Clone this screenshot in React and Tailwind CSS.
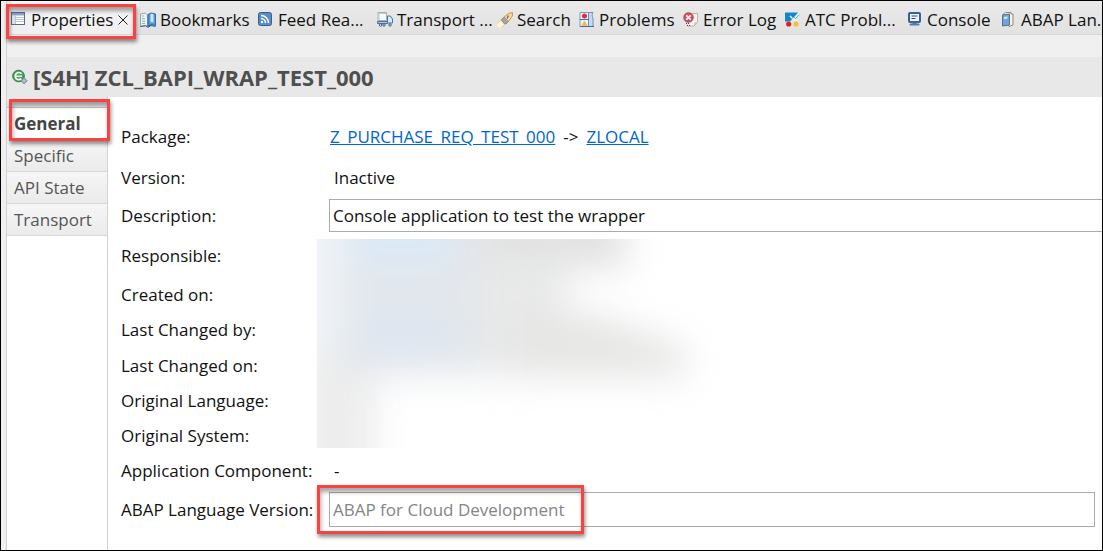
import React from "react";

const ICON = "h-4 w-4 shrink-0";

function TableIcon() {
  return (
    <svg className={ICON} viewBox="0 0 16 16" aria-hidden="true">
      <rect x="0.5" y="0.5" width="13" height="12" fill="#fff" stroke="#5d6a8c" />
      <rect x="1" y="1" width="12" height="2.500" fill="#8fa3c8" />
      <path d="M1 5.500h12M1 7.500h12M1 9.500h12M4.500 3v9" stroke="#b9c3d8" fill="none" />
      <rect x="1" y="4" width="3" height="8" fill="#dce3f0" />
    </svg>
  );
}

function BookIcon() {
  return (
    <svg className={ICON} viewBox="0 0 16 16" aria-hidden="true">
      <path d="M.5 2l5-1 2 2v11.500l-2-1-5 1z" fill="#eef3ea" stroke="#8a9a86" strokeWidth="0.8" />
      <path d="M2 4h2M2 6.500l3 .5M2 9l3 .5M2 11.500h3" stroke="#7fb0dc" fill="none" />
      <path d="M8 2.500l3-1.500 4.500 1v11.500l-4.500-1-3 2z" fill="#4f9ae0" stroke="#235d9c" strokeWidth="0.9" />
      <path d="M10.500 1.800v9l1.500-1 1.500 1.200V2z" fill="#cfe6fb" />
      <path d="M0.500 14.500l5-.8L8 15.300l3-1.800 4.500 1" stroke="#235d9c" fill="none" />
    </svg>
  );
}

function FeedIcon() {
  return (
    <svg className={ICON} viewBox="0 0 16 16" aria-hidden="true">
      <rect x="0.5" y="0.500" width="13" height="13" rx="2" fill="#5b8cc8" stroke="#315f9c" />
      <path d="M3 3.500a7.500 7.500 0 0 1 7.500 7.500M3 6.500a4.500 4.500 0 0 1 4.500 4.500" stroke="#fff" strokeWidth="1.400" fill="none" />
      <circle cx="4" cy="10" r="1.200" fill="#fff" />
    </svg>
  );
}

function TruckIcon() {
  return (
    <svg className={ICON} viewBox="0 0 16 16" aria-hidden="true">
      <rect x="1" y="0.500" width="8.500" height="8" fill="#f4fbff" stroke="#b9b184" />
      <path d="M2 8V1.500h7" stroke="#a9cdea" fill="none" />
      <path d="M10.500 4h2.800l2.200 3v4H10.500z" fill="#d9e9f8" stroke="#4275ae" />
      <path d="M0.500 9.500h10v2h-10z" fill="#a8c6e6" stroke="#4275ae" />
      <circle cx="3.500" cy="13" r="1.200" fill="#fff" stroke="#39577f" />
      <circle cx="7" cy="13" r="1.200" fill="#fff" stroke="#39577f" />
      <circle cx="13" cy="13" r="1.200" fill="#fff" stroke="#39577f" />
    </svg>
  );
}

function SearchIcon() {
  return (
    <svg className={ICON} viewBox="0 0 16 16" aria-hidden="true">
      <path d="M0 11.500L4 7.500l4.500 4.500L5 15.500H1z" fill="#fff6cf" />
      <path d="M0.500 11.500l4-4.500M4.500 15.500L9 11" stroke="#e7c878" fill="none" />
      <path d="M4.500 7.500L7 5l4.500 4.500L9 12c-2 0-4.500-2.500-4.500-4.500z" fill="#a5a3a6" stroke="#77767f" strokeWidth="0.700" />
      <path d="M7 5L12 1.200l3.500-.5L15.300 4l-3.800 5.500z" fill="#f8dc9d" stroke="#c58b35" strokeWidth="0.900" />
      <path d="M10 6.500l1.500-3" stroke="#4978b8" strokeWidth="1.500" />
    </svg>
  );
}

function ProblemsIcon() {
  return (
    <svg className={ICON} viewBox="0 0 16 16" aria-hidden="true">
      <path d="M1 .5h8.500v14H1z" fill="#eef4fb" stroke="#8196ba" />
      <path d="M9.500.5h4.500c-2 3 .5 5 0 9v5H9.500z" fill="#c5d8ed" stroke="#6f8fb9" />
      <path d="M1 7.500h9M1 14.500h14" stroke="#48699b" fill="none" />
      <circle cx="5.500" cy="4" r="2.500" fill="#da3038" />
      <path d="M5.500 9l2.800 4.500H2.700z" fill="#f3b52d" stroke="#e4c375" strokeWidth="0.600" />
    </svg>
  );
}

function ErrorLogIcon() {
  return (
    <svg className={ICON} viewBox="0 0 16 16" aria-hidden="true">
      <path d="M7 1.500h7.500v9l-3.500 3.500H5" fill="#f1f6fc" stroke="#c5b382" />
      <path d="M11 14v-3.500h3.500z" fill="#d6c69e" />
      <circle cx="5.500" cy="5.500" r="4.800" fill="#d85060" stroke="#b03545" strokeWidth="0.800" />
      <path d="M3.300 3.300l4.400 4.400M7.700 3.300L3.300 7.700" stroke="#fff" strokeWidth="1.700" />
      <path d="M3 11.500h1M5 11.500h1M4 13.500h1M6 13.500h1" stroke="#273f80" strokeWidth="1" />
    </svg>
  );
}

function AtcIcon() {
  return (
    <svg className={ICON} viewBox="0 0 16 16" aria-hidden="true">
      <path d="M0 .5h13L5 9.500H0z" fill="#1185cf" />
      <path d="M5 4l3.500 3.500L15 1.500" stroke="#e9f5fc" strokeWidth="1.600" fill="none" />
      <path d="M7 6.500l2-1.500 1.500 1.500L14.500 2.500" stroke="#5db3df" fill="none" />
      <circle cx="3.700" cy="12" r="2.600" fill="#e51b23" />
      <circle cx="11" cy="12" r="2.600" fill="#f6c431" />
    </svg>
  );
}

function ConsoleIcon() {
  return (
    <svg className={ICON} viewBox="0 0 16 16" aria-hidden="true">
      <rect x="2" y="1" width="11" height="9" rx="1" fill="#f1f6fd" stroke="#355f9f" strokeWidth="2" />
      <path d="M4.500 4h6M4.500 6.500h4" stroke="#3c4d76" fill="none" />
      <path d="M5.500 10.500h4V12h-4z" fill="#5578ad" />
      <rect x="2.500" y="11.500" width="10" height="2" rx="1" fill="#5578ad" />
    </svg>
  );
}

function AbapBookIcon() {
  return (
    <svg className={ICON} viewBox="0 0 16 16" aria-hidden="true">
      <path d="M2 2.500L4.500.5H10v1.500h2V13L8 14.500z" fill="#f8f4e2" stroke="#8d8a6e" />
      <path d="M1.500 3l7-1v11l-7 1z" fill="#6ea4e4" stroke="#5d6f81" />
      <path d="M3 5l3.500-.5v2L3 7z" fill="#d9e8f8" />
    </svg>
  );
}

function ClassIcon() {
  return (
    <svg className={ICON} viewBox="0 0 16 16" aria-hidden="true">
      <circle cx="6.500" cy="7" r="5.800" fill="#4aa05a" stroke="#2c7a45" />
      <path d="M9.600 4.800A3.600 3.600 0 1 0 9.400 9.600" stroke="#fff" strokeWidth="1.700" fill="none" />
      <path d="M4 7.200h6" stroke="#fff" strokeWidth="1.300" />
      <path d="M12 8.800l3 3-3 3-3-3z" fill="#b4bdd0" stroke="#6c7793" />
    </svg>
  );
}

function CloseIcon() {
  return (
    <svg className="h-3 w-3" viewBox="0 0 12 12" aria-hidden="true">
      <path d="M1.500 1.500l9 9M10.500 1.500l-9 9" stroke="#222" fill="none" />
    </svg>
  );
}

const views = [
  { name: "Bookmarks", Icon: BookIcon },
  { name: "Feed Rea...", Icon: FeedIcon },
  { name: "Transport ...", Icon: TruckIcon },
  { name: "Search", Icon: SearchIcon },
  { name: "Problems", Icon: ProblemsIcon },
  { name: "Error Log", Icon: ErrorLogIcon },
  { name: "ATC Probl...", Icon: AtcIcon },
  { name: "Console", Icon: ConsoleIcon },
  { name: "ABAP Lan...", Icon: AbapBookIcon },
];

function Highlight({ className }) {
  return (
    <div
      className={
        "pointer-events-none absolute z-10 border-3 border-[#fb4141] shadow-[1px_3px_4px_rgba(0,0,0,0.45),inset_1px_4px_4px_rgba(0,0,0,0.35)] " +
        className
      }
    />
  );
}

function RedactedArea() {
  return (
    <svg className="h-[209px] w-[420px]" viewBox="0 0 420 209" aria-hidden="true">
      <defs>
        <filter id="soft" x="-50%" y="-50%" width="200%" height="200%" colorInterpolationFilters="sRGB">
          <feGaussianBlur stdDeviation="18" />
        </filter>
      </defs>
      <rect width="60" height="209" fill="#fbfcfc" />
      <g filter="url(#soft)">
        <rect x="-20" y="-30" width="78" height="290" fill="#ededed" />
        <rect x="-30" y="-40" width="65" height="150" fill="#f0f4f8" />
        <rect x="25" y="-40" width="150" height="176" fill="#e3e7ec" />
        <rect x="35" y="-40" width="100" height="65" fill="#dbe9f7" />
        <rect x="40" y="80" width="90" height="30" fill="#dce6f2" />
        <rect x="165" y="-40" width="145" height="70" fill="#e2e2e2" />
        <rect x="165" y="20" width="85" height="116" fill="#e8e9e9" />
        <path d="M190 75h90l90 35v28H190z" fill="#e6e6e5" />
      </g>
    </svg>
  );
}

export default function App() {
  return (
    <div className="flex min-h-screen flex-col overflow-hidden border border-black bg-[#f0f0f0] pl-[5px] font-['Open_Sans','Noto_Sans',sans-serif] text-[17px] leading-6 text-[#111]">
      <div className="flex grow flex-col border-l border-[#d2d2d2]">
        <nav className="grid h-[34px] shrink-0 grid-cols-[128px_118px_119px_120px_82px_104px_102px_122px_94px_120px] border-b border-[#d6d6d6] bg-linear-to-b from-[#eaeaea] to-[#e2e2e2] pl-1 whitespace-nowrap">
          <div className="relative flex items-center gap-1 bg-linear-to-b from-[#f5f5f5] to-[#efefef] pt-1">
            <button className="flex items-center gap-1">
              <TableIcon />
              Properties
            </button>
            <button aria-label="Close Properties">
              <CloseIcon />
            </button>
            <Highlight className="-left-[5px] top-[3px] h-[35px] w-[130px]" />
          </div>
          {views.map(({ name, Icon }) => (
            <button key={name} className="flex items-center gap-1 pl-px pt-1">
              <Icon />
              {name}
            </button>
          ))}
        </nav>

        <header className="mt-[22px] flex h-10 shrink-0 items-center gap-[5px] bg-[#e8e8e8] pl-[5px]">
          <ClassIcon />
          <h1 className="text-[22px] font-bold text-[#4f4f4f]">[S4H] ZCL_BAPI_WRAP_TEST_000</h1>
        </header>

        <div className="flex grow bg-white">
          <aside className="w-[101px] shrink-0 border-r border-[#d4d4d4]">
            <div className="h-[11px] border-b border-[#c9c9c9] bg-[#ececec]" />
            <nav className="flex flex-col text-[#555]">
              <div className="relative">
                <button className="block h-8 w-full pl-[7px] text-left font-bold text-[#454545]">General</button>
                <Highlight className="-top-[9px] left-[2px] h-[42px] w-[101px]" />
              </div>
              {["Specific", "API State", "Transport"].map((name) => (
                <button
                  key={name}
                  className="h-8 border-b border-[#d6d6d6] bg-linear-to-b from-[#f6f6f6] to-[#ebebeb] pl-[7px] text-left"
                >
                  {name}
                </button>
              ))}
            </nav>
          </aside>

          <main className="grid grow grid-cols-[196px_minmax(0,1fr)] grid-rows-[44px_37px_39px_42px_35px_36px_35px_35px_35px_35px_43px] content-start items-center pl-[13px] pt-[18px] whitespace-nowrap">
            <span>Package:</span>
            <div className="flex gap-2 pl-[13px]">
              <a href="#package" className="text-[#0066cc] underline">Z_PURCHASE_REQ_TEST_000</a>
              <span>-&gt;</span>
              <a href="#parent" className="text-[#0066cc] underline">ZLOCAL</a>
            </div>
            <span>Version:</span>
            <span className="pl-[17px]">Inactive</span>
            <label htmlFor="description">Description:</label>
            <div className="pl-3">
              <input
                id="description"
                defaultValue="Console application to test the wrapper"
                className="block h-[33px] w-full border border-r-0 border-[#ababab] bg-white px-[3px] outline-none"
              />
            </div>
            <span className="col-start-1">Responsible:</span>
            <div className="col-start-2 row-span-6 self-start pt-1">
              <RedactedArea />
            </div>
            <span className="col-start-1">Created on:</span>
            <span className="col-start-1">Last Changed by:</span>
            <span className="col-start-1">Last Changed on:</span>
            <span className="col-start-1">Original Language:</span>
            <span className="col-start-1">Original System:</span>
            <span className="col-start-1">Application Component:</span>
            <span className="pl-[17px]">-</span>
            <label htmlFor="language-version">ABAP Language Version:</label>
            <div className="relative pl-3 pr-[7px]">
              <input
                id="language-version"
                readOnly
                defaultValue="ABAP for Cloud Development"
                className="block h-[35px] w-full border border-[#ababab] bg-white px-[3px] text-[#858585] outline-none"
              />
              <Highlight className="-top-[7px] left-0 h-[49px] w-[267px]" />
            </div>
          </main>
        </div>
      </div>
    </div>
  );
}
